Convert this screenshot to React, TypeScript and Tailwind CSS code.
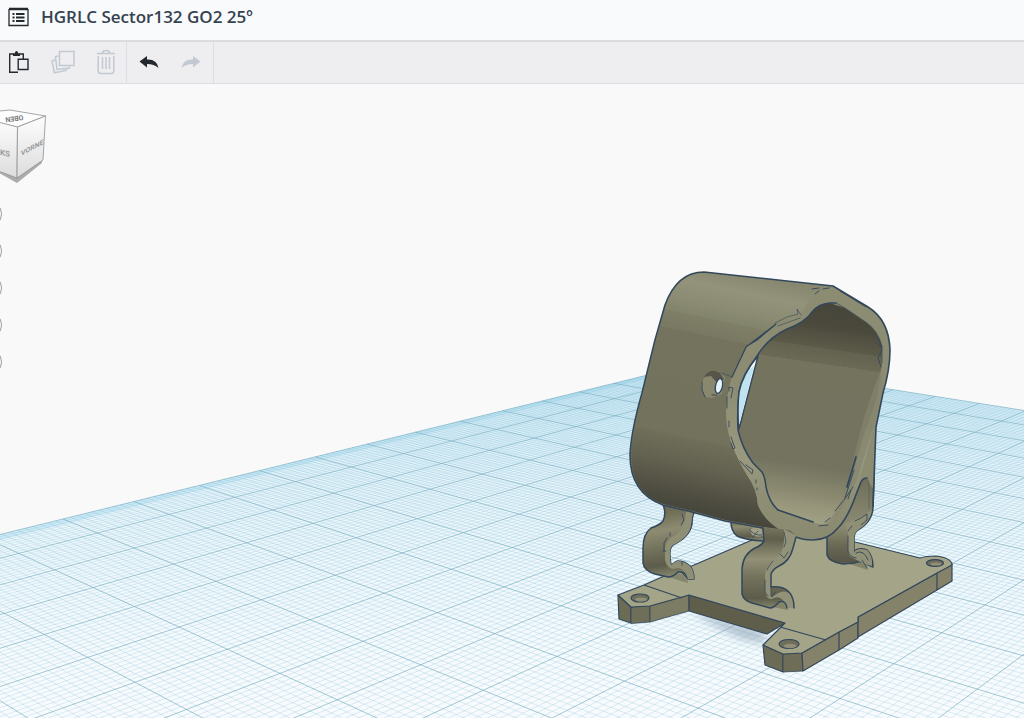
import type { ReactNode } from "react";

const EDGE = "#33475b";

// Ground plane camera: grid cell (u, v) -> scene coordinates
function project(u: number, v: number) {
  const w = 0.0434 * u - 0.0318 * v + 1;
  const x = (76.74 * u + 31.33 * v + 63) / w;
  const y = (4.3 * u - 2.92 * v + 519) / w;
  return `${x.toFixed(1)} ${y.toFixed(1)}`;
}

const U_MIN = -4;
const U_MAX = 14;
const V_MAX = 16;

function gridLines(step: number, skip: number) {
  let d = "";
  const uCount = Math.round((U_MAX - U_MIN) / step);
  const vCount = Math.round(V_MAX / step);
  for (let i = 0; i <= uCount; i++) {
    if (skip && i % skip === 0) continue;
    const u = U_MIN + i * step;
    d += `M${project(u, 0)}L${project(u, V_MAX)}`;
  }
  for (let i = 0; i <= vCount; i++) {
    if (skip && i % skip === 0) continue;
    const v = i * step;
    d += `M${project(U_MIN, v)}L${project(U_MAX, v)}`;
  }
  return d;
}

const MINOR = gridLines(0.1, 10);
const MAJOR = gridLines(1, 0);
const PLANE = `M${project(U_MIN, 0)}L${project(U_MAX, 0)}L${project(U_MAX, V_MAX)}L${project(U_MIN, V_MAX)}Z`;
const BACK_BAND = `M${project(U_MIN, 0)}L${project(U_MAX, 0)}L${project(U_MAX, 0.25)}L${project(U_MIN, 0.25)}Z`;

function Workplane() {
  return (
    <g>
      <path d={PLANE} fill="url(#plane)" />
      <path d={BACK_BAND} fill="#8fd0ea" opacity="0.3" />
      <path d={MINOR} stroke="#6ab5d0" strokeWidth="0.7" opacity="0.32" fill="none" />
      <path d={MAJOR} stroke="#68a5ba" strokeWidth="1" opacity="0.6" fill="none" />
    </g>
  );
}

function Plate() {
  return (
    <g stroke={EDGE} strokeWidth="1.2" strokeLinejoin="round">
      <path
        d="M690 609L765 632L765 644L740 638L710 623Z"
        fill="#8ba0b5"
        stroke="none"
        opacity="0.6"
        filter="url(#soft)"
      />
      {/* side walls */}
      <path d="M618 595L631 607L631 623L619 619Z" fill="#6c6b56" />
      <path d="M631 607L650 606L650 622L631 623.500Z" fill="#6f6e59" strokeWidth="0.8" />
      <path d="M650 606L689 595L689 611L650 622Z" fill="#7c7b63" strokeWidth="0.8" />
      <path d="M689 595L785 623L767 634L689 611Z" fill="#5f5e4b" />
      <path d="M763 645L783 654L783 672L765 665Z" fill="#6c6b56" />
      <path d="M783 654L802 653L803 671L783 672Z" fill="#6e6d57" strokeWidth="0.8" />
      <path d="M802 653L839 632L858 622L858 638L839 650L803 671Z" fill="#84836a" />
      <path d="M858 617L937 573L952 564L952 581L937 590L858 637Z" fill="#84836a" />
      <path d="M839 632V650M937 573V590" />
      {/* top */}
      <path
        d="M618 595L644 585L662 577L694 565L752 540L790 526L855 542L920 558Q926 556 936 556Q952 558 952 565L937 573L858 617L858 622L839 632L802 653L783 654L763 645L785 623L689 595L650 606L631 607Z"
        fill="#a3a488"
      />
      <path d="M644 585L682 598M780 627L826 640" />
      <g fill="#6e6e5b">
        <ellipse cx="640" cy="598" rx="9" ry="4" />
        <ellipse cx="789" cy="644" rx="10" ry="4.500" />
        <ellipse cx="935" cy="563" rx="8.500" ry="3.400" />
      </g>
      <g fill="#918f77" stroke="none">
        <ellipse cx="641" cy="599.500" rx="6" ry="2" />
        <ellipse cx="790" cy="646" rx="6.500" ry="2.200" />
        <ellipse cx="936" cy="564" rx="5.500" ry="1.500" />
      </g>
      {/* contact shadows */}
      <g fill="#77775f" stroke="none" opacity="0.7">
        <path d="M668 577L676 573L686 575L688 583Z" />
        <path d="M768 606L778 601L786 604L788 610Z" />
        <path d="M846 563L858 560L866 565L868 570Z" />
      </g>
    </g>
  );
}

function BackLegs() {
  return (
    <g stroke={EDGE} strokeWidth="1.5" strokeLinejoin="round" strokeLinecap="round">
      {/* rear left */}
      <path d="M731 518Q730 530 737 536Q745 540 764 541L768 522Z" fill="url(#leg)" />
      <path d="M750 530Q754 526 762 529L763 536Q756 538 752 535Z" fill="#a09f86" stroke="none" />
      <path d="M750 530Q754 536 762 535M753 537L758 531" fill="none" strokeWidth="0.800" />

      {/* front left */}
      <path
        d="M662 502Q667 513 663 521Q660 525 651 528Q643 534 643 548V563Q644 571 655 574L668 577Q673 577 678 572Q686 571 688 579H694Q694 571 690 566Q685 561 677 561L671 565Q668 548 673 545Q690 537 692 524Q692 515 695 511Z"
        fill="url(#leg)"
      />
      <path
        d="M686 511Q686 526 677 534Q666 539 665 548V560Q667 569 674 569Q684 565 688 579H694Q694 571 690 566Q684 561 677 561L671 565Q668 548 673 545Q690 537 691 524L693 512Z"
        fill="#8f8f75"
        stroke="none"
      />
      <path
        d="M664 551V543L667 538M670 533V536M663 551H666M682 514L684 520L681 525M682 562V565M681 572L687 578"
        fill="none"
        strokeWidth="0.900"
      />

      {/* rear right */}
      <path
        d="M857 478H874L873 508Q872 522 858 530Q854 533 854 538V552Q858 547 867 550Q873 556 873 567L866 564Q861 560 854 563L843 564Q829 562 827 555V537L838 520Z"
        fill="url(#legRight)"
      />
      <path
        d="M845 524L864 515L872 510Q870 523 858 530Q854 533 854 538V552Q858 547 867 550Q873 556 872 566L864 564L853 558Q848 556 848 550V534Z"
        fill="#909076"
        stroke="none"
      />
      <path
        d="M848 536V551Q850 557 856 558M848 531L852 526M855 521L861 518L867 514V520L861 525M856 553Q864 549 868 560M862 560L867 568"
        fill="none"
        strokeWidth="0.900"
      />
    </g>
  );
}

function FrontLeg() {
  return (
    <g strokeLinejoin="round" strokeLinecap="round">
      <path
        d="M763 527L764 541Q761 546 755 548Q743 554 742 569V594Q744 601 752 603L770 608Q774 608 779 602Q786 600 787 608H794Q794 597 789 592Q783 586 771 587V574Q773 569 779 566Q790 561 793 548L796 536L790 530Z"
        fill="url(#legFront)"
      />
      <path
        d="M784 529V541Q783 554 775 559Q765 565 765 575V590Q766 600 772 599Q782 593 787 608H794Q794 597 789 593Q783 589 775 595L771 597V574Q773 569 779 566Q790 561 793 548L797 536Z"
        fill="#929278"
      />
      <g fill="none" stroke={EDGE}>
        <path
          d="M763 528L764 541Q761 546 755 548Q743 554 742 569V594Q744 601 752 603L770 608Q774 608 779 602Q786 600 787 608M794 608Q794 597 789 592Q783 586 771 587V574Q773 569 779 566Q790 561 793 548L796 537"
          strokeWidth="1.500"
        />
        <path
          d="M771 587V596M765 580V592L768 596M767 570L769 566L773 561M780 554L784 558L788 552M784 532L786 542L784 547M772 597L775 592"
          strokeWidth="0.800"
        />
      </g>
    </g>
  );
}

function Mount() {
  return (
    <g strokeLinejoin="round" strokeLinecap="round">
      {/* rim and outer shell */}
      <path
        d="M704 272L833 286L868 307Q889 320 890 350Q890 370 883 393L876 427L874 480V490L869 483Q866 474 861 482L857 492Q848 518 838 528Q828 540 813 540Q803 540 796 537L763 528L725 521L692 512L663 505Q630 493 630 455Q631 432 642 393L655 340L665 305Q677 272 704 272Z"
        fill="#8c8c73"
      />
      <path
        d="M704 273L833 287Q818 290 812 298Q806 303 803 311Q799 316 775 325L747 347L732 377Q724 403 727 424Q729 445 747 475Q757 489 758 505Q765 521 780 530L763 527L725 520L692 511L663 504Q631 493 631 455Q632 432 643 393L656 340L666 305Q678 273 704 273Z"
        fill="url(#shell)"
      />
      {/* lower rim catches more light */}
      <path
        d="M732 377Q724 403 727 424Q729 445 747 475Q757 489 758 505Q765 524 790 534L813 539Q828 538 838 527Q848 516 856 492L873 430L866 430L846 500Q835 522 820 527L775 510Q766 500 765 480Q763 473 753 463Q738 445 738 427V405Z"
        fill="url(#rim)"
      />
      <path
        d="M873 506L874 480L876 427L883 393Q890 370 890 350Q889 320 868 307L833 286L704 272Q677 272 665 305L655 340L642 393Q631 432 630 455Q630 493 663 505L692 512L725 521L763 528M796 537Q803 540 813 540Q828 540 838 528Q848 518 857 492L861 482Q863 478 867 478"
        fill="none"
        stroke={EDGE}
        strokeWidth="1.600"
      />
      <path d="M867 478Q869 480 869 486V508" fill="none" stroke="#5d6058" strokeWidth="0.800" />

      {/* inner opening */}
      <path
        d="M830 303Q818 304 812 312Q806 322 787 329Q768 338 757 356Q742 376 739 392Q737 410 738 430Q742 448 753 463L762 472Q765 477 766 487Q769 502 778 510L815 523Q826 527 835 517Q845 504 849 486L862 440L877 398L882 363V346Q878 331 867 323L845 308Z"
        fill="url(#inner)"
      />
      <path
        d="M881 370Q869 400 862 425L848 480Q842 509 826 523Q836 519 842 508L857 480L874 425L883 388Z"
        fill="#85856d"
        opacity="0.700"
      />
      <path d="M758 356Q742 374 739 392Q737 410 739 429Z" fill="#f9f9f9" stroke={EDGE} strokeWidth="1.400" />
      <path d="M754 366L747 371Q741 380 739.500 392Q738 408 739 425Z" fill="#bfe3f1" />
      <path
        d="M836 303L830 303Q818 304 812 312Q806 322 787 329Q768 338 757 356Q742 376 739 392Q737 410 738 430Q742 448 753 463L762 472Q765 477 766 487Q769 502 778 510"
        fill="none"
        stroke={EDGE}
        strokeWidth="1.500"
      />
      <path d="M836 303L845 308L867 323Q878 331 882 346V363" fill="none" stroke="#45525b" strokeWidth="0.900" />

      {/* feature edges */}
      <g fill="none" stroke={EDGE} strokeWidth="0.900">
        <path d="M732 377L746 347L776 324M747 346L757 340L775 325" strokeWidth="1.200" />
        <path d="M732 377L722 373M775 323L787 317L798 314L797 309L801 315M778 326L800 318" strokeWidth="0.600" />
        <path d="M812 289L819 288M815 294L819 291M823 289L829 288M840 291L866 307" />
        <path d="M729 391V387L733 388L731 398M727 397V408M729 421V427" />
        <path d="M731 437L735 448L733 449L731 443M740 461L752 474L753 470L746 465M756 480V483M757 488V490" />
        <path d="M856 457L847 487" strokeWidth="1.800" />
        <path d="M854 470L845 498M853 487L844 500M851 490L848 499M843 501L835 511M830 518L825 522M819 526L828 525" />
        <path d="M878 338L882 348L877 343M882 350L878 358L881 367" />
        <path d="M778 510L813 522" strokeWidth="1.800" />
      </g>

      {/* side hole */}
      <path d="M703 380Q708 370 717 371L725 377L722 394L712 398L705 397Q702 393 701 384Z" fill="#89886f" />
      <path d="M704 377Q710 367 720 373L724 379L717 383L711 376Z" fill="#56554a" />
      <path d="M702 382V390L705 397M712 395H717" fill="none" stroke={EDGE} strokeWidth="1" />
      <ellipse cx="719" cy="386" rx="3.500" ry="7.500" transform="rotate(12 719 386)" fill="#e5f4fa" stroke={EDGE} strokeWidth="1.400" />
    </g>
  );
}

function Scene() {
  return (
    <svg
      className="block w-full"
      viewBox="0 84 1024 634"
      role="img"
      aria-label="HGRLC Sector132 GO2 25º"
    >
      <defs>
        <linearGradient id="plane" gradientUnits="userSpaceOnUse" x1="0" y1="360" x2="0" y2="700">
          <stop offset="0" stopColor="#d7effa" />
          <stop offset="0.35" stopColor="#e9f5fb" />
          <stop offset="1" stopColor="#f8fbfd" />
        </linearGradient>
        <linearGradient id="shell" gradientUnits="userSpaceOnUse" x1="745" y1="275" x2="694" y2="519">
          <stop offset="0" stopColor="#87886f" />
          <stop offset="0.07" stopColor="#92937a" />
          <stop offset="0.14" stopColor="#8b8c73" />
          <stop offset="0.2" stopColor="#83846c" />
          <stop offset="0.2" stopColor="#7f7f68" />
          <stop offset="0.27" stopColor="#797963" />
          <stop offset="0.27" stopColor="#73735e" />
          <stop offset="0.68" stopColor="#72725d" />
          <stop offset="0.69" stopColor="#6e6e59" />
          <stop offset="0.8" stopColor="#626150" />
          <stop offset="0.9" stopColor="#504f42" />
          <stop offset="1" stopColor="#434239" />
        </linearGradient>
        <linearGradient id="inner" gradientUnits="userSpaceOnUse" x1="835" y1="305" x2="803" y2="525">
          <stop offset="0" stopColor="#47463a" />
          <stop offset="0.1" stopColor="#4a493c" />
          <stop offset="0.14" stopColor="#525142" />
          <stop offset="0.2" stopColor="#5c5b49" />
          <stop offset="0.2" stopColor="#636250" />
          <stop offset="0.27" stopColor="#6b6a56" />
          <stop offset="0.27" stopColor="#73735e" />
          <stop offset="0.73" stopColor="#737360" />
          <stop offset="0.82" stopColor="#84836b" />
          <stop offset="0.92" stopColor="#98977c" />
          <stop offset="1" stopColor="#a2a286" />
        </linearGradient>
        <linearGradient id="rim" gradientUnits="userSpaceOnUse" x1="0" y1="377" x2="0" y2="540">
          <stop offset="0" stopColor="#8c8c73" />
          <stop offset="0.5" stopColor="#99997f" />
          <stop offset="0.75" stopColor="#8e8e75" />
          <stop offset="1" stopColor="#8a8a70" />
        </linearGradient>
        <linearGradient id="leg" x1="0" y1="0" x2="0.1" y2="1">
          <stop offset="0" stopColor="#5c5b4a" />
          <stop offset="0.2" stopColor="#727159" />
          <stop offset="0.4" stopColor="#8d8c72" />
          <stop offset="0.6" stopColor="#76755e" />
          <stop offset="0.85" stopColor="#5d5c4b" />
          <stop offset="1" stopColor="#85846b" />
        </linearGradient>
        <linearGradient id="legFront" gradientUnits="userSpaceOnUse" x1="0" y1="527" x2="0" y2="608">
          <stop offset="0" stopColor="#77765f" />
          <stop offset="0.15" stopColor="#605f4d" />
          <stop offset="0.4" stopColor="#929177" />
          <stop offset="0.6" stopColor="#75745e" />
          <stop offset="0.88" stopColor="#5d5c4b" />
          <stop offset="1" stopColor="#85846b" />
        </linearGradient>
        <linearGradient id="legRight" gradientUnits="userSpaceOnUse" x1="0" y1="480" x2="0" y2="566">
          <stop offset="0" stopColor="#6f6e59" />
          <stop offset="0.35" stopColor="#82816a" />
          <stop offset="0.55" stopColor="#8b8a71" />
          <stop offset="0.75" stopColor="#6b6a55" />
          <stop offset="0.95" stopColor="#57564a" />
          <stop offset="1" stopColor="#85846b" />
        </linearGradient>
        <filter id="soft" x="-20%" y="-20%" width="140%" height="140%">
          <feGaussianBlur stdDeviation="4" />
        </filter>
      </defs>
      <Workplane />
      <Plate />
      <BackLegs />
      <Mount />
      <FrontLeg />
    </svg>
  );
}

function ViewCube() {
  return (
    <svg className="block" width="48" height="80" viewBox="0 105 48 80" aria-hidden="true">
      <defs>
        <linearGradient id="cubeFace" x1="0" y1="0" x2="0" y2="1">
          <stop offset="0" stopColor="#fdfdfd" />
          <stop offset="1" stopColor="#dcdcdd" />
        </linearGradient>
      </defs>
      <path d="M-10 168L17 183L42 163V158L17 176Z" fill="#a9abad" />
      <g stroke="#8f9193" strokeWidth="0.800" strokeLinejoin="round">
        <path d="M-10 112L10 110L45.500 116L17.500 127L-10 121Z" fill="#fdfdfd" />
        <path d="M-10 120L17.500 127L17 178L-10 168Z" fill="url(#cubeFace)" />
        <path d="M17.500 127L45.500 116L43 160L17 178Z" fill="url(#cubeFace)" />
      </g>
      <g fontFamily="Roboto, sans-serif" fontWeight="700" fill="#97999c">
        <text transform="translate(0 155) skewY(10)" fontSize="8">
          K
          <tspan>S</tspan>
        </text>
        <text transform="translate(21 156) skewY(-28)" fontSize="7">
          VORNE
        </text>
        <text transform="translate(23 115) rotate(172)" fontSize="7" fill="#77797c">
          OBEN
        </text>
      </g>
    </svg>
  );
}

interface ToolButtonProps {
  label: string;
  width: string;
  disabled?: boolean;
  children: ReactNode;
}

function ToolButton({ label, width, disabled, children }: ToolButtonProps) {
  return (
    <button
      type="button"
      aria-label={label}
      disabled={disabled}
      className={`flex h-10 items-center justify-center ${width} ${
        disabled ? "text-[#c3c9d3]" : "text-[#24292e]"
      }`}
    >
      {children}
    </button>
  );
}

const VIEW_CONTROLS = ["Home", "Fit view", "Zoom in", "Zoom out", "Perspective"];

export default function App() {
  return (
    <div className="min-h-screen overflow-hidden bg-[#f9f9f9] font-['Open_Sans',sans-serif]">
      {/* Header */}
      <header className="flex h-[42px] items-center gap-3 border-b-2 border-[#d9dbdf] bg-[#f9fafc] pb-1.5 pl-2">
        <button type="button" aria-label="Designs" className="text-[#24292e]">
          <svg width="21" height="20" viewBox="0 0 21 20" fill="none" stroke="currentColor">
            <path d="M1 2H20" strokeWidth="2.500" />
            <path d="M1 2V18.500H20V2" strokeWidth="1.300" />
            <path d="M8 7H16.500M8 10.500H16.500M8 14H16.500" strokeWidth="1.800" />
            <path d="M4.500 7H6.500M4.500 10.500H6.500M4.500 14H6.500" strokeWidth="1.800" />
          </svg>
        </button>
        <h1 className="whitespace-nowrap text-[17px] leading-6 font-semibold text-[#35424f]">
          HGRLC Sector132 GO2 25º
        </h1>
      </header>

      {/* Toolbar */}
      <div className="flex h-[42px] border-b border-[#dbdde1] bg-[#eeeef1]">
        <div className="flex gap-1 border-r border-[#dcdee2] pr-0.5">
          <ToolButton label="Paste" width="w-[38px]">
            <svg width="22" height="24" viewBox="0 0 22 24" fill="none" stroke="currentColor" strokeWidth="1.400">
              <path d="M6 4H1.700V22.300H10M11 4H15.300V9" />
              <path d="M5 3.500H6.500Q7 1 8.500 1T10.500 3.500H12V6H5Z" fill="currentColor" stroke="none" />
              <path d="M10.200 9.200H20V19.500H10.200Z" />
            </svg>
          </ToolButton>
          <ToolButton label="Duplicate" width="w-[42px]" disabled>
            <svg width="24" height="24" viewBox="0 0 24 24" fill="none" stroke="currentColor" strokeWidth="1.500">
              <path d="M8.500 1.500H23V15.500H8.500Z" />
              <path d="M7.500 6L4.500 6.500L6 19.500L18.500 18V16.500" />
              <path d="M4 10L1 11L3.500 22.800L15 20.500V19" />
            </svg>
          </ToolButton>
          <ToolButton label="Delete" width="w-9" disabled>
            <svg width="20" height="26" viewBox="0 0 20 26" fill="none" stroke="currentColor" strokeWidth="1.500">
              <path d="M1 4.500H19M6.500 4Q6.500 1.500 10 1.500T13.500 4" />
              <path d="M2.200 7V22Q2.200 24.500 5 24.500H15Q17.800 24.500 17.800 22V7" />
              <path d="M6.500 8V20M10 8V20M13.500 8V20" />
            </svg>
          </ToolButton>
        </div>
        <div className="flex border-r border-[#dcdee2] px-px">
          <ToolButton label="Undo" width="w-[42px]">
            <svg width="20" height="14" viewBox="0 0 20 14" fill="currentColor">
              <path d="M0.500 6.500L8 1V4.500Q18 4 19.500 13Q15 9 8 9V12.500Z" />
            </svg>
          </ToolButton>
          <ToolButton label="Redo" width="w-[42px]" disabled>
            <svg width="20" height="14" viewBox="0 0 20 14" fill="currentColor">
              <path d="M19.500 6.500L12 1V4.500Q2 4 0.500 13Q5 9 12 9V12.500Z" />
            </svg>
          </ToolButton>
        </div>
      </div>

      {/* Viewport */}
      <main className="relative">
        <Scene />
        <div className="absolute top-[21px] left-0">
          <ViewCube />
        </div>
        <div className="absolute top-[116px] -left-[26px] flex flex-col gap-[9px]">
          {VIEW_CONTROLS.map((label) => (
            <button
              key={label}
              type="button"
              aria-label={label}
              className="h-7 w-7 rounded-full border border-[#9a9da1] bg-white"
            />
          ))}
        </div>
      </main>
    </div>
  );
}
